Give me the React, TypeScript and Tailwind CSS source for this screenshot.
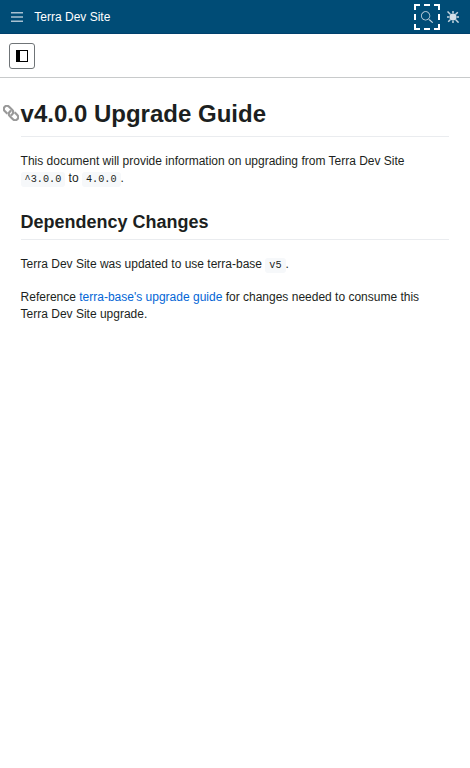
import React from "react";

function MenuIcon() {
  return (
    <svg className="h-3 w-3" viewBox="0 0 12 12" fill="#a9c1d1">
      <path d="M0 1h12v1.500H0zM0 5.200h12v1.600H0zM0 9.500h12V11H0z" />
    </svg>
  );
}

function SearchIcon() {
  return (
    <svg className="h-3 w-3" viewBox="0 0 48 48" fill="#c5d5e0">
      <path d="M47.300 43.700 35 32.500l-5 2.500 13.700 12.300c1 1 2.600 1 3.600 0s1-2.600 0-3.600z" />
      <path d="M18.500 .5C8.300 .5 0 9 0 19.300S8.300 38 18.500 38 37 29.600 37 19.300 28.700 .5 18.500 .5zm0 34.500C9.900 35 3 28 3 19.300S9.900 3.500 18.500 3.500 34 10.500 34 19.300 27.100 35 18.500 35z" />
    </svg>
  );
}

function BrightnessIcon() {
  return (
    <svg className="h-3 w-3" viewBox="0 0 12 12" fill="none" stroke="#c5d5e0" strokeWidth="1.500">
      <rect x="2.700" y="2.700" width="6.600" height="6.600" rx="2" fill="#d5e1e9" stroke="none" />
      <path d="M6 0v2.500M6 9.500V12M0 6h2.500M9.500 6H12M.5 .5l2.800 2.800M10.800 1.200 8.700 3.300M1.200 10.800l2.100-2.100M11.600 11.600 8.700 8.700" />
    </svg>
  );
}

function PanelIcon() {
  return (
    <svg className="h-3 w-3" viewBox="0 0 12 12" shapeRendering="crispEdges">
      <path d="M0 0h12v12H0z" fill="#000" />
      <path d="M4 1h7v10H4z" fill="#fff" />
    </svg>
  );
}

function LinkIcon() {
  return (
    <svg className="h-4 w-4" viewBox="0 0 16 16" fill="none" stroke="#999" strokeWidth="2.200">
      <g transform="rotate(45 8 8)">
        <path d="M6 11.100H2.200a3.100 3.100 0 0 1 0-6.200h4.600a3.100 3.100 0 0 1 2.400 5" />
        <path d="M10 4.900h3.800a3.100 3.100 0 0 1 0 6.200H9.200a3.100 3.100 0 0 1-2.400-5" />
      </g>
    </svg>
  );
}

function Code({ children }: { children: React.ReactNode }) {
  return (
    <code className="rounded-[3px] bg-[#f6f8fa] px-[4px] py-[2.040px] font-['Liberation_Mono',monospace] text-[10.200px]">
      {children}
    </code>
  );
}

export default function App() {
  return (
    <div className="flex h-screen flex-col bg-white font-['Liberation_Sans',Arial,sans-serif] text-xs text-[#1c1f21]">
      <header className="flex h-[34px] shrink-0 items-center border-b border-[#00416d] bg-[#004c76] pr-1 text-white">
        <button className="flex h-[34px] w-[34px] items-center justify-center" aria-label="Menu">
          <MenuIcon />
        </button>
        <span className="grow pl-[0.300px]">Terra Dev Site</span>
        <button className="relative flex h-[26px] w-[26px] items-center justify-center" aria-label="Search">
          <svg className="absolute inset-0" width="26" height="26" fill="none" stroke="#fff" strokeWidth="2">
            <path d="M0 1h26M0 25h26M1 0v26M25 0v26" strokeDasharray="6 4" />
          </svg>
          <SearchIcon />
        </button>
        <button className="flex h-[26px] w-[26px] items-center justify-center" aria-label="Theme">
          <BrightnessIcon />
        </button>
      </header>
      <div className="flex h-11 shrink-0 items-center border-b border-[#c8cacb] px-[9px]">
        <button className="flex h-[26px] w-[26px] items-center justify-center rounded-[3px] border border-[#6f7477]" aria-label="Toggle panel">
          <PanelIcon />
        </button>
      </div>
      <main className="px-[20.570px] pt-[18px] leading-[17px]">
        <h1 className="-ml-[18px] flex items-center text-2xl font-bold leading-9">
          <a className="-mt-[2px] mr-[2px] w-4 shrink-0" aria-label="Permalink">
            <LinkIcon />
          </a>
          v4.0.0 Upgrade Guide
        </h1>
        <div className="mt-1 border-b border-[#eaecef]" />
        <p className="mt-4">
          This document will provide information on upgrading from Terra Dev Site <Code>^3.0.0</Code> to <Code>4.0.0</Code>.
        </p>
        <h2 className="mt-[22px] border-b border-[#eaecef] pb-1 text-lg font-bold leading-[25px]">Dependency Changes</h2>
        <p className="mt-4">
          Terra Dev Site was updated to use terra-base <Code>v5</Code>.
        </p>
        <p className="mt-[15px]">
          Reference <a className="text-[#0366d6]">terra-base's upgrade guide</a> for changes needed to consume this Terra Dev Site upgrade.
        </p>
      </main>
    </div>
  );
}
